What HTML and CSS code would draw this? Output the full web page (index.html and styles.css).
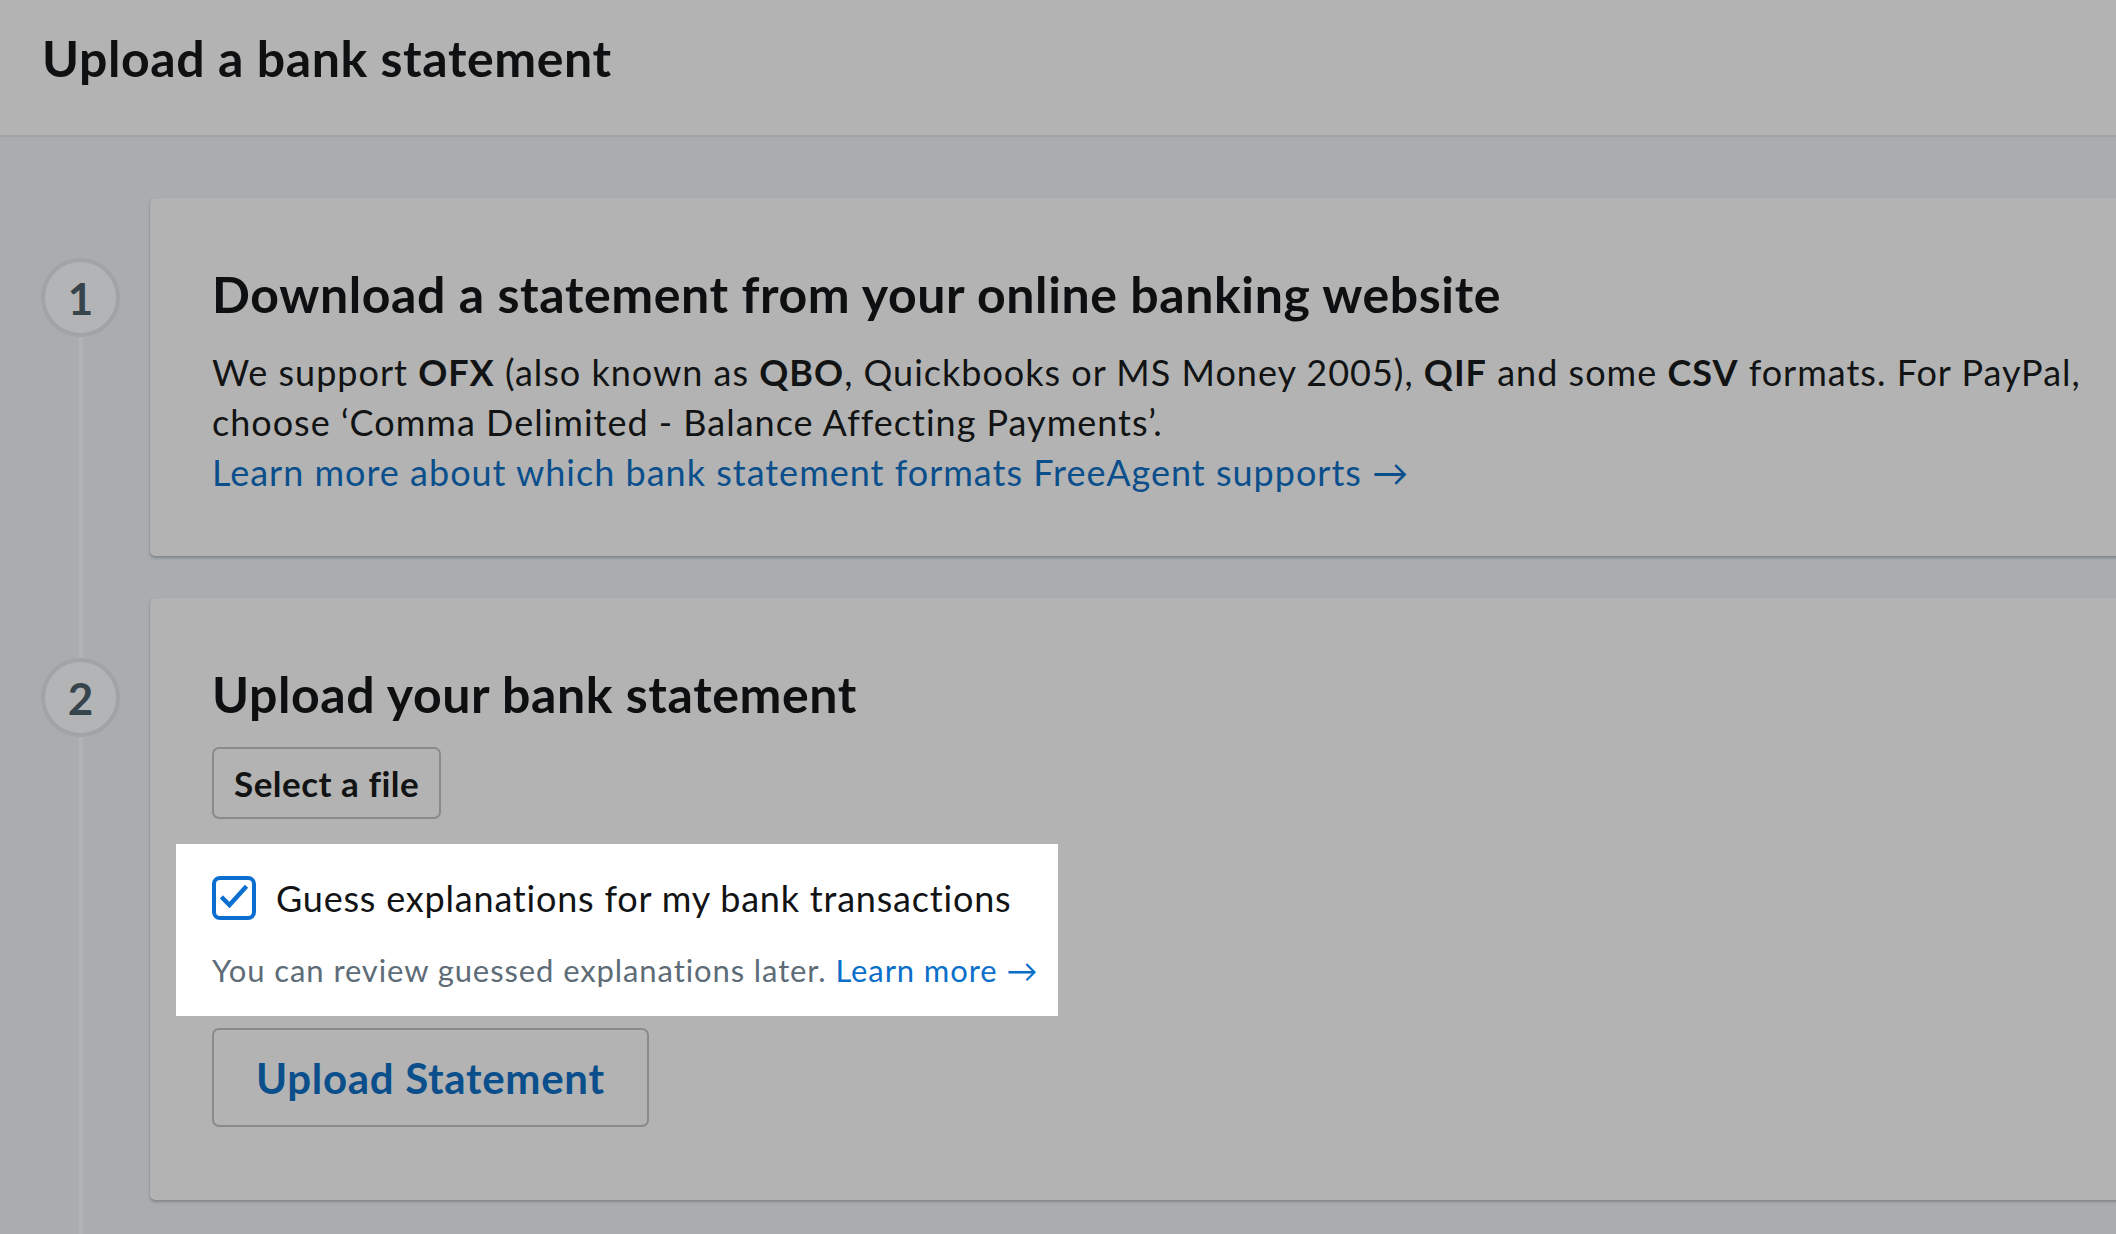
FILE: index.html
```html
<!DOCTYPE html>
<html lang="en">
<head>
<meta charset="utf-8">
<title>Upload a bank statement</title>
<link rel="stylesheet" href="styles.css">
</head>
<body>

<div class="page-header">
	<h1>Upload a bank statement</h1>
</div>

<ol class="steps">
	<li class="step">
		<div class="step-marker">
			<span class="step-line step-line-top"></span>
			<span class="step-number">1</span>
			<span class="step-line"></span>
		</div>
		<div class="step-card">
			<h2>Download a statement from your online banking website</h2>
			<p class="step-text">We support <strong>OFX</strong> (also known as <strong>QBO</strong>, Quickbooks or MS Money 2005), <strong>QIF</strong> and some <strong>CSV</strong> formats. For PayPal, choose ‘Comma Delimited - Balance Affecting Payments’.<br>
			<a href="#">Learn more about which bank statement formats FreeAgent supports →</a></p>
		</div>
	</li>
	<li class="step">
		<div class="step-marker">
			<span class="step-line step-line-top"></span>
			<span class="step-number">2</span>
			<span class="step-line"></span>
		</div>
		<div class="step-card step-card-upload">
			<h2>Upload your bank statement</h2>
			<button class="btn btn-file" type="button">Select a file</button>
			<div class="spotlight">
				<label class="check-row">
					<span class="checkbox">
						<svg width="36" height="36" viewBox="0 0 36 36"><path d="M7 18.5 L13.5 25 L29 8" fill="none" stroke="#0b6fd0" stroke-width="4.5" stroke-linecap="square"/></svg>
					</span>
					Guess explanations for my bank transactions
				</label>
				<p class="hint">You can review guessed explanations later. <a href="#">Learn more →</a></p>
			</div>
			<button class="btn btn-upload" type="button">Upload Statement</button>
		</div>
	</li>
</ol>

</body>
</html>
```

FILE: styles.css
```css
body {
	margin: 0;
	background-color: #a9adb0;
	font-family: Lato, "Open Sans", sans-serif;
	color: #111314;
	overflow: hidden;
}

.page-header {
	height: 107px;
	background-color: #b3b3b3;
	border-bottom: 2px solid #a0a3a6;
	padding: 28px 42px 0 42px;
}

.page-header h1 {
	margin: 0;
	font-size: 50px;
	line-height: 60px;
	letter-spacing: 0.6px;
	font-weight: 700;
	color: #0e1011;
}

.steps {
	list-style-type: none;
	margin: 0;
	padding: 61px 0 0 0;
}

.step {
	display: flex;
}

.step-marker {
	width: 79px;
	margin: 0 30px 0 41px;
	display: flex;
	flex-direction: column;
	align-items: center;
	flex-shrink: 0;
}

.step-number {
	width: 71px;
	height: 71px;
	border: 4px solid #a1a4a7;
	border-radius: 50%;
	background-color: #b2b4b6;
	display: flex;
	align-items: center;
	justify-content: center;
	font-size: 44px;
	font-weight: 700;
	color: #37444c;
}

.step-line {
	width: 4px;
	flex: 1;
	background-color: #b1b4b6;
}

.step-line-top {
	flex: none;
	height: 60px;
}

.step:first-child .step-line-top {
	visibility: hidden;
}

.step-card {
	flex: 1;
	margin: 0 -80px 42px 0;
	padding: 66px 62px 59px 62px;
	background-color: #b3b3b3;
	border-radius: 5px;
	box-shadow: 0 2px 3px rgba(0, 0, 0, 0.22), 0 0 1px rgba(0, 0, 0, 0.2);
}

.step-card-upload {
	padding-bottom: 73px;
}

.step-card h2 {
	margin: 0 0 23px 0;
	font-size: 50px;
	line-height: 60px;
	letter-spacing: 0.6px;
	font-weight: 700;
	color: #0d0f10;
}

.step-text {
	margin: 0;
	max-width: 1880px;
	font-size: 36px;
	line-height: 50px;
	letter-spacing: 1px;
}

.step-text strong {
	font-weight: 700;
}

a {
	color: #0a4f8c;
	text-decoration: none;
}

.btn {
	display: block;
	font-family: inherit;
	background-color: #b3b3b3;
	border: 2px solid #878b8e;
	border-radius: 7px;
	font-weight: 700;
	cursor: pointer;
}

.btn-file {
	height: 72px;
	padding: 0 20px;
	font-size: 35px;
	letter-spacing: 0.5px;
	color: #111314;
}

.spotlight {
	display: inline-block;
	margin: 25px 0 0 -36px;
	padding: 32px 20px 26px 36px;
	background-color: #ffffff;
}

.check-row {
	display: flex;
	align-items: center;
	gap: 20px;
	font-size: 36px;
	letter-spacing: 0.8px;
	color: #111314;
}

.checkbox {
	width: 36px;
	height: 36px;
	border: 4px solid #0b6fd0;
	border-radius: 8px;
	display: flex;
	align-items: center;
	justify-content: center;
}

.hint {
	margin: 30px 0 0 0;
	font-size: 31px;
	line-height: 40px;
	letter-spacing: 0.9px;
	color: #5d6c77;
}

.hint a {
	color: #0a6fc9;
}

.btn-upload {
	margin-top: 12px;
	height: 99px;
	padding: 0 42px;
	font-size: 42px;
	letter-spacing: 0.7px;
	color: #0a4f8c;
}
```
